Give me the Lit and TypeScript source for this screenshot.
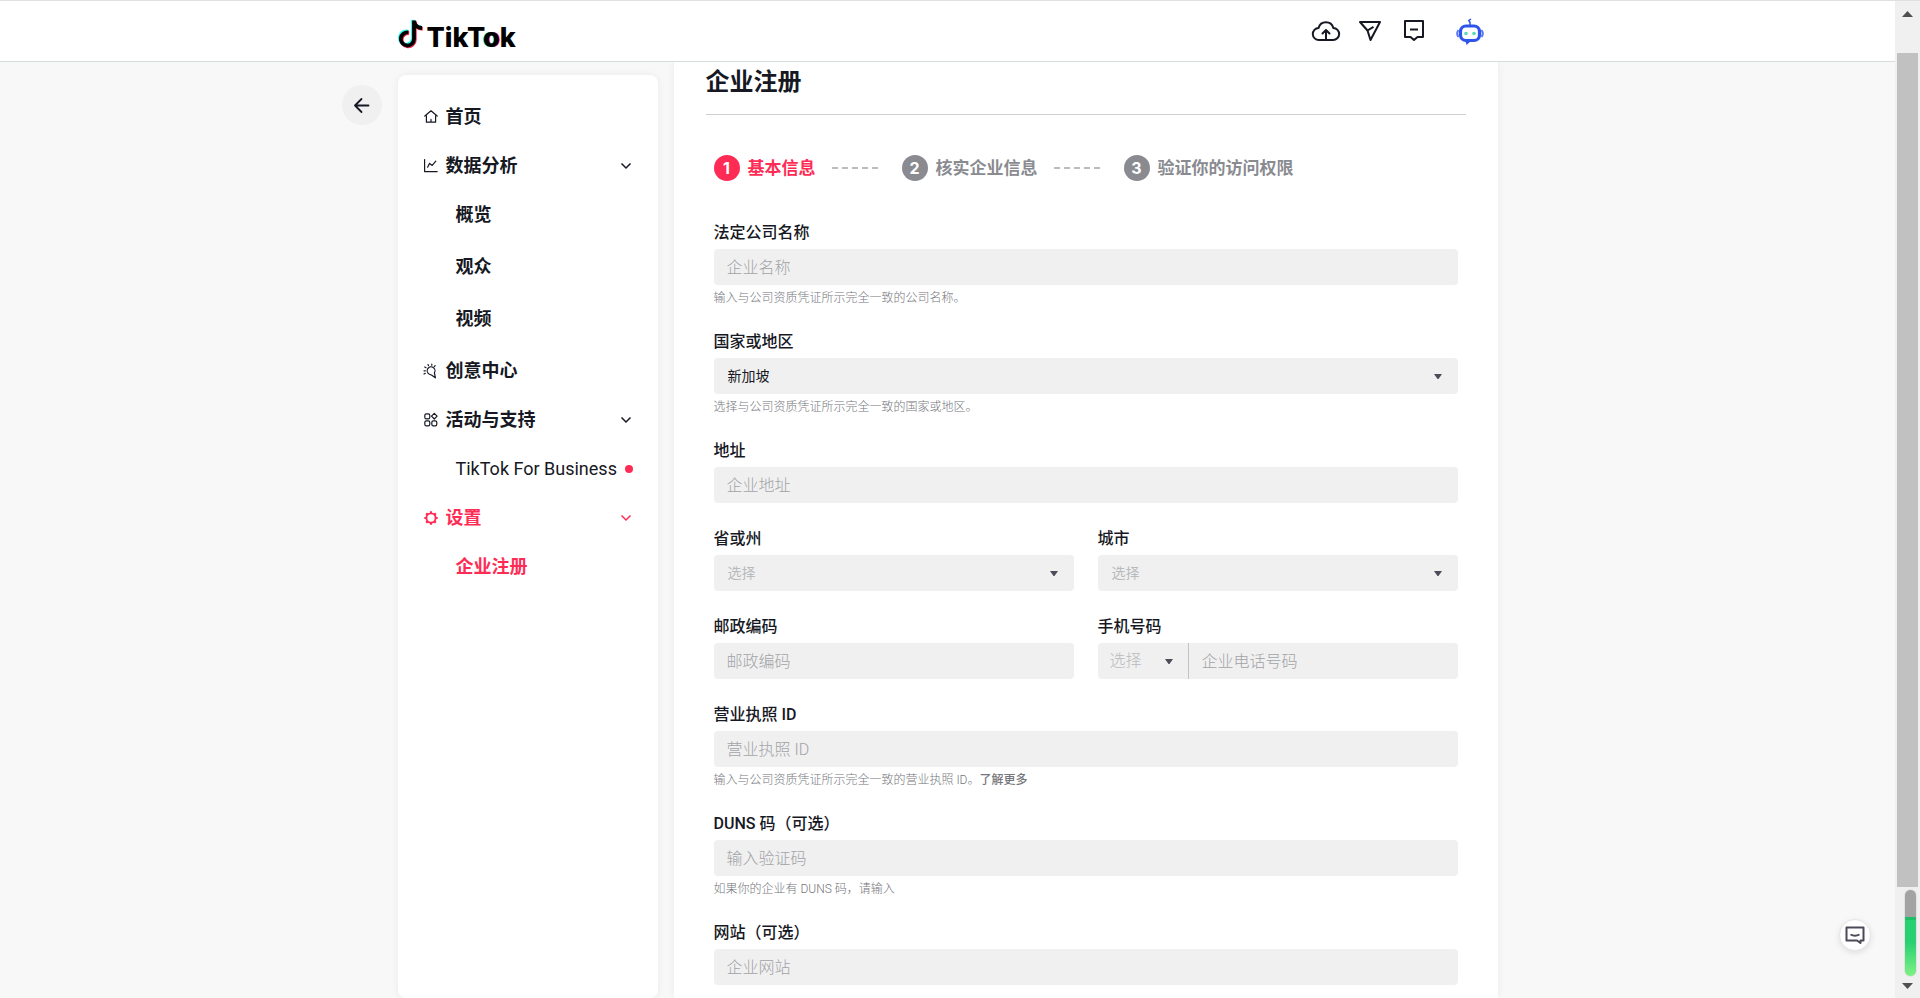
import { LitElement, html, css, svg, nothing } from "lit";
import { customElement } from "lit/decorators.js";
import { classMap } from "lit/directives/class-map.js";

const FONT = css`"Roboto", "Noto Sans CJK SC", sans-serif`;

const reset = css`
  :host { box-sizing: border-box; }
  *, *::before, *::after { box-sizing: border-box; }
  ul, ol { list-style: none; margin: 0; padding: 0; }
  h1 { margin: 0; }
  svg { display: block; flex: none; overflow: visible; }
  a { color: inherit; text-decoration: none; }
  button { border: 0; padding: 0; background: none; color: inherit; font: inherit; cursor: pointer; }
`;

const navIcon = (body: unknown) => html`
  <svg width="14" height="14" viewBox="0 0 14 14" fill="none" stroke="currentColor"
    stroke-width="1.2" stroke-linecap="round" stroke-linejoin="round" aria-hidden="true">${body}</svg>`;

const icons: Record<string, unknown> = {
  home: svg`<path d="M.8 6 7 .8 13.200 6M2.400 5.400v6.800h9.200V5.400M7 9.400v2.600"/>`,
  chart: svg`<path d="M.6.6v12h12.600M3.600 8.200l2-3.800 2.600 2 3.600-4.200"/>`,
  idea: svg`<path d="M5 10A3.900 3.900 0 1 1 10.400 8.800L11.400 13.800 7.800 11.200ZM.8 3l1.200.7M0 6.800h1.300M0 10l1.200-.6M4 .6l.5 1M7.800 0v1.200M11.200 1.600l-.9.9"/>`,
  apps: svg`<rect x=".8" y=".8" width="5" height="5" rx="1.600"/><rect x=".8" y="7.800" width="5" height="5" rx="1.600"/><rect x="7.800" y="7.800" width="5" height="5" rx="1.600"/><path d="m10.300.4 2.800 2.800-2.800 2.800-2.800-2.800Z"/>`,
  gear: svg`<circle cx="7" cy="7" r="4.600" stroke-width="1.900"/><path stroke-width="2.200" stroke-linecap="butt" d="M7 .3v2M7 11.700v2M.3 7h2M11.700 7h2M2.200 2.200l1.400 1.400M10.400 10.400l1.400 1.400M2.200 11.800l1.400-1.400M10.400 3.600l1.400-1.400"/>`,
};

interface NavItem {
  text: string;
  icon: string;
  active?: boolean;
  children?: { text: string; dot?: boolean; active?: boolean; latin?: boolean }[];
}

const NAV: NavItem[] = [
  { text: "首页", icon: "home" },
  { text: "数据分析", icon: "chart", children: [{ text: "概览" }, { text: "观众" }, { text: "视频" }] },
  { text: "创意中心", icon: "idea" },
  { text: "活动与支持", icon: "apps", children: [{ text: "TikTok For Business", dot: true, latin: true }] },
  { text: "设置", icon: "gear", active: true, children: [{ text: "企业注册", active: true }] },
];

@customElement("site-header")
export class SiteHeader extends LitElement {
  static styles = [reset, css`
    :host { display: block; border-top: 1px solid #e0e0e0; border-bottom: 1px solid #d3dedd; background: #fff; }
    .bar { width: 1100px; max-width: 100%; height: 60px; margin: 0 auto; display: flex; align-items: center; justify-content: space-between; }
    .logo { display: flex; align-items: center; gap: 4px; padding-top: 5px; color: #000; font: 800 27px/32px "Inter", ${FONT}; }
    .word { padding-top: 8px; }
    .tone { text-shadow: -1px 0 #25f4ee, 1px 0 #fe2c55; }
    .tools { display: flex; align-items: center; padding-right: 6px; color: #161823; }
    .tools button { width: 44px; height: 40px; display: grid; place-items: center; }
    .tools .bot { margin-left: 12px; }
  `];

  render() {
    return html`
      <div class="bar">
        <a class="logo" href="#" aria-label="TikTok">
          <svg width="25" height="30" viewBox="0 0 25 30" aria-hidden="true">
            <g fill="none" stroke-width="3.8">
              <path stroke="#25f4ee" d="M9.600 12.500A6.600 6.600 0 1 0 15 19.500V1C15.400 5.500 18.400 8 23 8.200"/>
              <path stroke="#fe2c55" d="M11.200 14.300A6.600 6.600 0 1 0 16.800 21V2.500C17.200 7 20 9.400 24.800 9.800"/>
              <path stroke="#000" d="M10.400 13.400A6.600 6.600 0 1 0 16 20.200V1.600C16.300 6.200 19.200 8.800 24 9"/>
            </g>
          </svg>
          <span class="word">TikT<span class="tone">o</span>k</span>
        </a>
        <div class="tools">
          <button type="button" aria-label="上传">
            <svg width="28" height="22" viewBox="0 0 28 22" fill="none" stroke="currentColor" stroke-width="2" stroke-linecap="round" stroke-linejoin="round"><path d="M7 20a6 6 0 0 1-.4-12A7.600 7.600 0 0 1 21.300 8 6 6 0 0 1 21 20ZM14 19v-8.500M10.500 13.500 14 10l3.500 3.500"/></svg>
          </button>
          <button type="button" aria-label="私信">
            <svg width="22" height="20" viewBox="0 0 22 20" fill="none" stroke="currentColor" stroke-width="2" stroke-linejoin="round"><path d="M1 1h20L11.500 19 8.500 9.500ZM8.500 9.500l6-3.700"/></svg>
          </button>
          <button type="button" aria-label="收件箱">
            <svg width="22" height="22" viewBox="0 0 22 22" fill="none" stroke="currentColor" stroke-width="2" stroke-linejoin="round"><path d="M2 1h18v16h-5.500L11 20l-3.500-3H2ZM7 9.500h8"/></svg>
          </button>
          <button class="bot" type="button" aria-label="助手">
            <svg width="28" height="27" viewBox="0 0 28 27" aria-hidden="true"><path d="M14 7V4.500l-1.200-2L15 1" fill="none" stroke="#2f54eb" stroke-width="1.500"/><rect x="4.500" y="8" width="19" height="14.500" rx="5.500" fill="#fff" stroke="#2f54eb" stroke-width="3.200"/><path d="M9.500 23H15l-4.500 4Z" fill="#2f54eb"/><path d="M2.500 12Q0 15.500 2.500 19M25.500 12q2.500 3.500 0 7" fill="none" stroke="#5b78f0" stroke-width="2"/><circle cx="10" cy="15.500" r="1.800" fill="#5ad8b9"/><circle cx="18" cy="15.500" r="1.800" fill="#5ad8b9"/></svg>
          </button>
        </div>
      </div>`;
  }
}

@customElement("side-nav")
export class SideNav extends LitElement {
  static styles = [reset, css`
    :host { display: block; padding: 30px 24px; border-radius: 8px; background: #fff; box-shadow: 0 0 8px rgba(0, 0, 0, .06); color: #161823; font: 700 18px/24px ${FONT}; }
    .menu, .sub { display: grid; gap: 25px; }
    .menu { padding-left: 2px; }
    .row { display: flex; align-items: center; width: 100%; height: 24px; text-align: left; }
    .icon { width: 14px; margin-right: 8px; }
    .text { flex: 1; white-space: nowrap; }
    .row > svg { margin-right: 1px; }
    .sub { padding: 25px 0 0 32px; }
    .sub.many { gap: 28px; padding-bottom: 3px; }
    .sub .text { flex: none; }
    .latin { font-weight: 400; }
    .dot { width: 8px; height: 8px; margin-left: 8px; border-radius: 50%; background: #fe2c55; }
    .active { color: #fe2c55; }
  `];

  render() {
    return html`<nav><ul class="menu">${NAV.map((n) => html`
      <li>
        ${n.children
          ? html`<button type="button" class=${classMap({ row: true, active: !!n.active })} aria-expanded="true">
              <span class="icon">${navIcon(icons[n.icon])}</span><span class="text">${n.text}</span>
              <svg width="14" height="14" viewBox="0 0 14 14" fill="none" stroke="currentColor" stroke-width="1.500" aria-hidden="true"><path d="m2.500 4.500 4.500 4.500 4.500-4.500"/></svg>
            </button>`
          : html`<a class="row" href="#"><span class="icon">${navIcon(icons[n.icon])}</span><span class="text">${n.text}</span></a>`}
        ${n.children
          ? html`<ul class=${classMap({ sub: true, many: n.children.length > 1 })}>${n.children.map((c) => html`
              <li><a href="#" class=${classMap({ row: true, active: !!c.active, latin: !!c.latin })}>
                <span class="text">${c.text}</span>${c.dot ? html`<span class="dot"></span>` : nothing}
              </a></li>`)}</ul>`
          : nothing}
      </li>`)}</ul></nav>`;
  }
}

@customElement("registration-form")
export class RegistrationForm extends LitElement {
  static styles = [reset, css`
    :host { display: block; padding: 0 32px; background: #fff; box-shadow: 0 0 8px rgba(0, 0, 0, .06); color: #161823; font: 400 16px/24px ${FONT}; }
    h1 { padding: 4px 0 16px; border-bottom: 1px solid #d0d1d3; font-size: 24px; line-height: 32px; font-weight: 700; }
    .steps { display: flex; align-items: center; padding: 40px 8px 39px; gap: 16px; color: #8a8b91; font-size: 17px; line-height: 26px; font-weight: 700; }
    .step { display: flex; align-items: center; gap: 8px; }
    .step.on { color: #fe2c55; }
    .num { width: 26px; height: 26px; border-radius: 50%; background: #8a8b91; color: #fff; font-family: "Inter", sans-serif; font-size: 16px; text-align: center; }
    .step.on .num { background: #fe2c55; }
    .dash { width: 48px; height: 2px; margin-right: 6px; background: repeating-linear-gradient(90deg, #bbbcbf 0 6px, transparent 6px 10px); }
    form { display: grid; gap: 23px; padding: 0 8px; }
    .pair { display: grid; grid-template-columns: 1fr 1fr; gap: 24px; }
    .field { display: flex; flex-direction: column; min-width: 0; }
    label { margin-bottom: 3px; line-height: 26px; font-weight: 500; }
    input, select { width: 100%; height: 36px; border: 0; border-radius: 4px; outline: 0; padding: 0 13px; background: #f0f0f0; color: #161823; font: 400 16px/24px ${FONT}; }
    input { font-weight: 300; }
    input::placeholder { color: #a2a3a7; opacity: 1; }
    select { appearance: none; padding: 0 36px 0 14px; font-size: 14px; }
    .pick { display: grid; align-items: center; }
    .pick > * { grid-area: 1 / 1; }
    .pick svg { justify-self: end; margin-right: 16px; pointer-events: none; }
    .empty { color: #b9babd; }
    .phone { display: grid; grid-template-columns: 91px 1fr; }
    .phone select { border-radius: 4px 0 0 4px; border-right: 1px solid #c2c3c8; padding: 0 20px 0 12px; font-size: 16px; font-weight: 300; }
    .phone input { border-radius: 0 4px 4px 0; }
    .help { padding-top: 6px; font-size: 12px; line-height: 15px; font-weight: 300; color: #75767c; }
    .help a { font-weight: 500; }
  `];

  private caret() {
    return html`<svg width="8" height="5" viewBox="0 0 8 5" aria-hidden="true"><path d="M0 0h8L4.500 5h-1Z" fill="#4c4d58"/></svg>`;
  }

  private text(id: string, label: string, placeholder: string, help: unknown = nothing) {
    return html`<div class="field">
      <label for=${id}>${label}</label>
      <input id=${id} type="text" placeholder=${placeholder}>
      ${help === nothing ? nothing : html`<div class="help">${help}</div>`}
    </div>`;
  }

  private pick(id: string, label: string, value: string, empty: boolean, help: unknown = nothing) {
    return html`<div class="field">
      <label for=${id}>${label}</label>
      <div class="pick"><select id=${id} class=${classMap({ empty })}><option>${value}</option></select>${this.caret()}</div>
      ${help === nothing ? nothing : html`<div class="help">${help}</div>`}
    </div>`;
  }

  render() {
    return html`
      <h1>企业注册</h1>
      <ol class="steps">
        <li class="step on"><span class="num">1</span>基本信息</li>
        <li class="dash" aria-hidden="true"></li>
        <li class="step"><span class="num">2</span>核实企业信息</li>
        <li class="dash" aria-hidden="true"></li>
        <li class="step"><span class="num">3</span>验证你的访问权限</li>
      </ol>
      <form>
        ${this.text("company", "法定公司名称", "企业名称", "输入与公司资质凭证所示完全一致的公司名称。")}
        ${this.pick("country", "国家或地区", "新加坡", false, "选择与公司资质凭证所示完全一致的国家或地区。")}
        ${this.text("address", "地址", "企业地址")}
        <div class="pair">
          ${this.pick("state", "省或州", "选择", true)}
          ${this.pick("city", "城市", "选择", true)}
        </div>
        <div class="pair">
          ${this.text("zip", "邮政编码", "邮政编码")}
          <div class="field">
            <label for="phone">手机号码</label>
            <div class="phone">
              <div class="pick"><select class="empty" aria-label="国家代码"><option>选择</option></select>${this.caret()}</div>
              <input id="phone" type="tel" placeholder="企业电话号码">
            </div>
          </div>
        </div>
        ${this.text("license", "营业执照 ID", "营业执照 ID", html`输入与公司资质凭证所示完全一致的营业执照 ID。<a href="#">了解更多</a>`)}
        ${this.text("duns", "DUNS 码（可选）", "输入验证码", "如果你的企业有 DUNS 码，请输入")}
        ${this.text("website", "网站（可选）", "企业网站")}
      </form>`;
  }
}

@customElement("app-root")
export class AppRoot extends LitElement {
  static styles = [reset, css`
    :host { display: grid; grid-template-columns: 1fr 25px; height: 100vh; overflow: hidden; background: #f8f8f8; }
    .page { display: grid; grid-template-rows: auto minmax(0, 1fr); min-width: 0; min-height: 0; position: relative; }
    .shift { display: grid; grid-template-rows: minmax(0, 1fr); justify-content: center; padding-right: 56px; overflow: hidden; }
    .body { width: 1156px; max-width: 100%; display: grid; grid-template-columns: 40px 260px minmax(0, 1fr); grid-template-rows: minmax(0, 1fr); gap: 16px; }
    .back { width: 40px; height: 40px; margin-top: 23px; border-radius: 50%; background: #f0f0f0; display: grid; place-items: center; }
    side-nav { margin-top: 13px; }
    .chat { position: absolute; right: 24px; bottom: 47px; width: 32px; height: 32px; border: 1px solid #e6e6e6; border-radius: 50%; background: #fff; box-shadow: 0 2px 6px rgba(0, 0, 0, .1); display: grid; place-items: center; color: #4a4b57; }
    .scroll { display: grid; grid-template-rows: 52px minmax(0, 1fr) 111px; justify-items: center; min-height: 0; background: #f0f0f0; border-top: 1px solid #e0e0e0; }
    .up { margin-top: 10px; }
    .thumb { width: 21px; background: #c1c1c1; }
    .end { display: flex; flex-direction: column; align-items: center; justify-content: space-between; padding: 2px 0 9px; }
    .meter { width: 13px; height: 88px; margin-left: 6px; border: 1px solid #e2e2e2; border-radius: 7px; background: linear-gradient(#a3a3a3 0 27px, #1fbe68 27px 30px, #28cf73 30px 60%, #7df283); }
  `];

  render() {
    return html`
      <div class="page">
        <site-header></site-header>
        <div class="shift">
          <div class="body">
            <button class="back" type="button" aria-label="返回">
              <svg width="16" height="16" viewBox="0 0 16 16" fill="none" stroke="#161823" stroke-width="1.800" stroke-linecap="round" stroke-linejoin="round"><path d="M14.500 8.500H1M7.500 2 1 8.500 7.500 15"/></svg>
            </button>
            <side-nav></side-nav>
            <registration-form></registration-form>
          </div>
        </div>
        <button class="chat" type="button" aria-label="反馈">
          <svg width="20" height="18" viewBox="0 0 20 18" fill="none" stroke="currentColor" stroke-width="2" stroke-linejoin="round"><path d="M1.500 1.500h17v13h-3V17L12 14.500H1.500ZM5.500 8.500q4.500 2.500 9 0"/></svg>
        </button>
      </div>
      <div class="scroll" aria-hidden="true">
        <svg class="up" width="11" height="6" viewBox="0 0 11 6"><path d="M0 6 5.500 0 11 6Z" fill="#505050"/></svg>
        <div class="thumb"></div>
        <div class="end">
          <div class="meter"></div>
          <svg width="11" height="6" viewBox="0 0 11 6"><path d="m0 0 5.500 6L11 0Z" fill="#505050"/></svg>
        </div>
      </div>`;
  }
}
